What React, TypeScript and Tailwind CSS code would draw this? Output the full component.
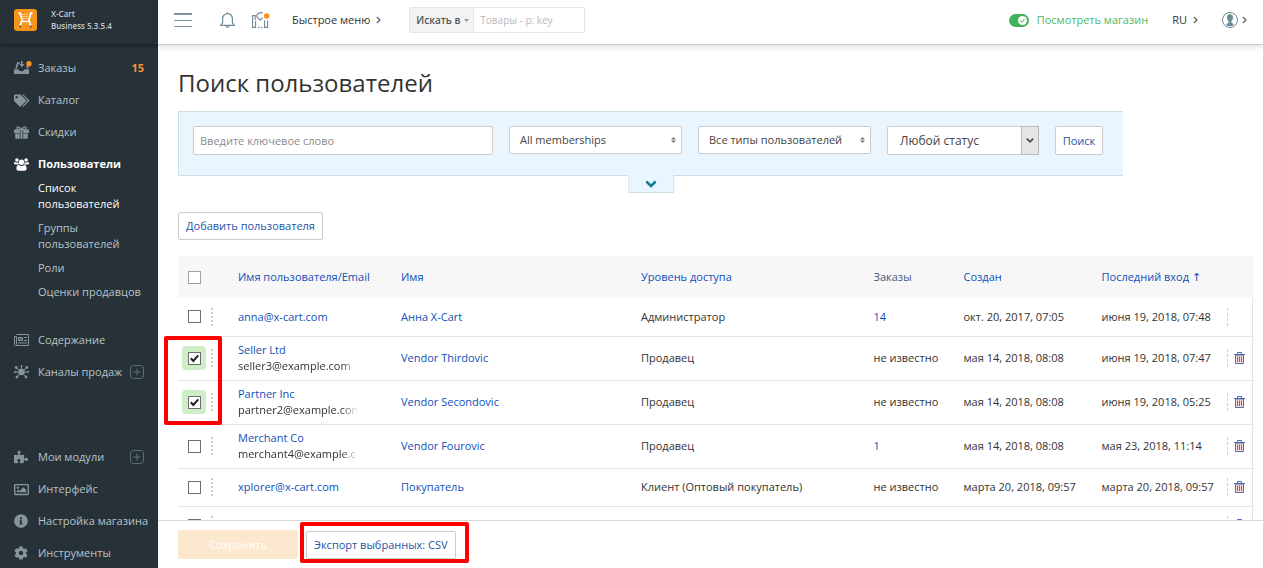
import React from "react";
import { FaTags, FaPuzzlePiece, FaRegImage, FaInfoCircle, FaCog } from "react-icons/fa";

const Chevron = () => (
  <svg className="h-2 w-[5px] shrink-0" viewBox="0 0 5 8" fill="none" stroke="#5b5b5b" strokeWidth="1.2">
    <path d="M.8 1 4 4 .8 7" />
  </svg>
);

const OrdersIcon = () => (
  <svg className="h-3.5 w-[18px]" viewBox="0 0 18 14">
    <path fill="currentColor" d="M3 1.200h3v1.500H4.300L3 7.600H1.200zM0 8.300h4.400c.4 1.300 1.400 2 3.100 2s2.700-.7 3.100-2H15V13H0zM12 4.500h1.800l1.100 3.100h-1.700zM7.100 0h1.500v3h2L7.900 6.200 5.200 3h1.900z" />
    <circle cx="15" cy="2.700" r="2.700" fill="#f7901e" />
  </svg>
);

const GiftIcon = () => (
  <svg className="h-[13px] w-[15px]" viewBox="0 0 15 13" fill="currentColor">
    <path d="M0 3.600h5.800V7H0zM9.200 3.600H15V7H9.200zM6.500 3.600h2v9.200h-2zM1.200 7.500h4.600v5.300H2.200a1 1 0 0 1-1-1zM9.200 7.500h4.600v4.300a1 1 0 0 1-1 1H9.200z" />
    <path d="M7.300 3.400C6.200 1.500 5.200.8 4.100.8c-1.600 0-1.700 2.500 0 2.600zM7.700 3.400C8.800 1.500 9.800.8 10.900.8c1.600 0 1.700 2.500 0 2.600z" fill="none" stroke="currentColor" strokeWidth="1.300" />
  </svg>
);

const UsersIcon = () => (
  <svg className="h-[13px] w-[15px]" viewBox="0 0 15 13" fill="currentColor">
    <circle cx="2.900" cy="2" r="1.800" />
    <circle cx="12.100" cy="2" r="1.800" />
    <circle cx="7.500" cy="4.200" r="2.700" />
    <path d="M1.200 4.100c1 .7 2 .7 3 .2.100 1 .4 1.700 1 2.300H1.500C.5 6.600 0 6.100 0 5.300c0-.7.500-1.400 1.200-1.200zM13.800 4.100c-1 .7-2 .7-3 .2-.1 1-.4 1.700-1 2.300h3.700c1 0 1.500-.5 1.500-1.300 0-.7-.5-1.400-1.200-1.200zM4.700 6.900c1.600 1.300 4 1.300 5.600 0 1.700 0 2.300 1.700 2.300 3.700 0 1.300-.8 2.100-2.100 2.100h-6c-1.300 0-2.100-.8-2.100-2.100 0-2 .6-3.700 2.300-3.700z" />
  </svg>
);

const NewsIcon = () => (
  <svg className="h-3 w-[15px]" viewBox="0 0 15 12" fill="none" stroke="currentColor">
    <path d="M2.500.5h12v11h-13a1 1 0 0 1-1-1v-8h2M2.500 2.500V10.500" />
    <path d="M4.500 3.500h4v3h-4z" fill="currentColor" fillOpacity=".5" />
    <path d="M10 3.500h3M10 6.500h3M4 8.900h9" />
  </svg>
);

const ChannelsIcon = () => (
  <svg className="h-3.5 w-[15px]" viewBox="0 0 15 14" stroke="currentColor" fill="currentColor">
    <path d="M7.500 7 2 2.500M7.500 7 13 2.500M7.500 7H.8M7.500 7h6.700M7.500 7 3 12M7.500 7 12 12M7.500 7V1" strokeWidth="1" />
    <circle cx="7.500" cy="7" r="3.200" stroke="none" />
    <g stroke="none">
      <circle cx="2.200" cy="2.500" r="1.400" />
      <circle cx="12.800" cy="2.500" r="1.400" />
      <circle cx="1" cy="7" r="1" />
      <circle cx="14" cy="7" r="1" />
      <circle cx="3" cy="12" r="1.400" />
      <circle cx="12" cy="12" r="1.400" />
      <circle cx="7.500" cy="1" r="1" />
    </g>
  </svg>
);

const Plus = () => (
  <svg className="size-3.5" viewBox="0 0 14 14" fill="none" stroke="#5f6f78">
    <rect x=".5" y=".5" width="13" height="13" rx="3" />
    <path d="M7 3.500v7M3.500 7h7" />
  </svg>
);

const Trash = () => (
  <svg className="h-3 w-[11px]" viewBox="0 0 11 12" fill="none">
    <path d="M1.500 3h8v8.500h-8z" fill="#f7dcdc" stroke="#5a6fae" />
    <path d="M3.500 4.500v5.500M5.500 4.500v5.500M7.500 4.500v5.500" stroke="#b8525f" />
    <path d="M0 2.500h11M3.500 2V.5h4V2" stroke="#4468b3" />
  </svg>
);

type NavItem = { label: string; icon: React.ReactNode; count?: string; plus?: boolean; active?: boolean };

const mainNav: NavItem[] = [
  { label: "Заказы", icon: <OrdersIcon />, count: "15" },
  { label: "Каталог", icon: <FaTags size={15} /> },
  { label: "Скидки", icon: <GiftIcon /> },
  { label: "Пользователи", icon: <UsersIcon />, active: true },
];
const subNav = ["Список пользователей", "Группы пользователей", "Роли", "Оценки продавцов"];
const salesNav: NavItem[] = [
  { label: "Содержание", icon: <NewsIcon /> },
  { label: "Каналы продаж", icon: <ChannelsIcon />, plus: true },
];
const systemNav: NavItem[] = [
  { label: "Мои модули", icon: <FaPuzzlePiece size={14} />, plus: true },
  { label: "Интерфейс", icon: <FaRegImage size={15} /> },
  { label: "Настройка магазина", icon: <FaInfoCircle size={14} /> },
  { label: "Инструменты", icon: <FaCog size={14} /> },
];

function NavList({ items }: { items: NavItem[] }) {
  return (
    <ul>
      {items.map((item) => (
        <li key={item.label}>
          <a href="#" className={`flex h-8 items-center pr-3.5 pl-3.5 whitespace-nowrap ${item.active ? "font-bold text-white" : "text-[#b7c3ca]"}`}>
            <span className={`w-6 shrink-0 ${item.active ? "text-white" : "text-[#87949b]"}`}>{item.icon}</span>
            <span>{item.label}</span>
            {item.count && <span className="ml-auto font-bold text-[#f7923a]">{item.count}</span>}
            {item.plus && <span className="ml-auto"><Plus /></span>}
          </a>
        </li>
      ))}
    </ul>
  );
}

function Checkbox({ label, checked, light }: { label: string; checked?: boolean; light?: boolean }) {
  return (
    <label className={`relative grid size-6 place-items-center rounded-sm ${checked ? "bg-[#cdeec6]" : ""}`}>
      <input type="checkbox" aria-label={label} defaultChecked={checked} className={`peer size-[13px] appearance-none border bg-white ${light ? "border-[#a0a0a0]" : "border-[#6e6e6e]"}`} />
      <svg className="pointer-events-none absolute hidden size-[9px] peer-checked:block" viewBox="0 0 9 9" fill="none" stroke="#1d1d1d" strokeWidth="2">
        <path d="M.8 4.300 3.300 7 8.300 1.300" />
      </svg>
    </label>
  );
}

type User = {
  login: string;
  email?: string;
  name: string;
  role: string;
  orders: string;
  created: string;
  last: string;
  checked?: boolean;
  locked?: boolean;
};

const users: User[] = [
  { login: "anna@x-cart.com", name: "Анна X-Cart", role: "Администратор", orders: "14", created: "окт. 20, 2017, 07:05", last: "июня 19, 2018, 07:48", locked: true },
  { login: "Seller Ltd", email: "seller3@example.com", name: "Vendor Thirdovic", role: "Продавец", orders: "не известно", created: "мая 14, 2018, 08:08", last: "июня 19, 2018, 07:47", checked: true },
  { login: "Partner Inc", email: "partner2@example.com", name: "Vendor Secondovic", role: "Продавец", orders: "не известно", created: "мая 14, 2018, 08:08", last: "июня 19, 2018, 05:25", checked: true },
  { login: "Merchant Co", email: "merchant4@example.com", name: "Vendor Fourovic", role: "Продавец", orders: "1", created: "мая 14, 2018, 08:08", last: "мая 23, 2018, 11:14" },
  { login: "xplorer@x-cart.com", name: "Покупатель", role: "Клиент (Оптовый покупатель)", orders: "не известно", created: "марта 20, 2018, 09:57", last: "марта 20, 2018, 09:57" },
  { login: "", name: "", role: "", orders: "", created: "", last: "" },
];

function UserRow({ user }: { user: User }) {
  return (
    <tr className={`border-b border-[#e4e4e4] ${user.email ? "h-11" : "h-[38px]"}`}>
      <td className="pl-1">
        <div className="flex items-center gap-[5px]">
          <Checkbox label={`Выбрать ${user.login}`} checked={user.checked} />
          <span className="h-[18px] border-l-2 border-dotted border-[#cdcdcd]" />
        </div>
      </td>
      <td className="leading-4">
        <a href="#" className="text-[#0f4fb8]">{user.login}</a>
        {user.email && (
          <div className="w-[120px] overflow-hidden [mask-image:linear-gradient(to_right,black_104px,transparent_120px)]">{user.email}</div>
        )}
      </td>
      <td><a href="#" className="text-[#0f4fb8]">{user.name}</a></td>
      <td>{user.role}</td>
      <td>{/^\d/.test(user.orders) ? <a href="#" className="text-[#0f4fb8]">{user.orders}</a> : user.orders}</td>
      <td>{user.created}</td>
      <td>{user.last}</td>
      <td className="border-r border-[#e4e4e4]">
        <div className="flex h-[18px] items-center border-l border-dashed border-[#cfcfcf] pl-1.5">
          {!user.locked && <button type="button" aria-label={`Удалить ${user.login}`}><Trash /></button>}
        </div>
      </td>
    </tr>
  );
}

function Select({ label, value }: { label: string; value: string }) {
  return (
    <div className="relative">
      <select aria-label={label} className="h-7 w-[173px] appearance-none rounded-xs border border-[#ccc] bg-white pr-5 pl-2.5 text-[#444]">
        <option>{value}</option>
      </select>
      <svg className="pointer-events-none absolute top-[11px] right-1.5 h-1.5 w-[5px]" viewBox="0 0 5 6" fill="#777">
        <path d="M0 2.500 2.500 0 5 2.500zM0 3.500h5L2.500 6z" />
      </svg>
    </div>
  );
}

function Header() {
  return (
    <header className="z-10 flex h-[45px] shrink-0 items-center border-b border-[#ccc] bg-white pr-4 pb-1 pl-4 text-[#333] shadow-[0_2px_6px_rgba(0,0,0,0.12)]">
      <button type="button" aria-label="Меню" className="flex w-[18px] flex-col gap-[5px]">
        <span className="h-0.5 bg-[#7d95a1]" />
        <span className="h-px bg-[#7d95a1]" />
        <span className="h-px bg-[#7d95a1]" />
      </button>
      <button type="button" aria-label="Уведомления" className="ml-7">
        <svg className="h-4 w-[15px]" viewBox="0 0 15 16" fill="none" stroke="#6f8996" strokeWidth="1.200">
          <path d="M.6 13.400h13.800l-2-2.600V6.500a4.900 4.900 0 0 0-9.800 0v4.300zM6 13.700a1.500 1.500 0 0 0 3 0M7.500 1.500V.2" />
        </svg>
      </button>
      <button type="button" aria-label="Маркетплейс" className="ml-[17px]">
        <svg className="h-4 w-[18px]" viewBox="0 0 18 16" fill="none" stroke="#6f8996" strokeWidth="1.100">
          <path d="M3.600 9v6.400h-3V3.600h2.600V8M4.600 4.200C4.800 1.800 6.800.6 10.600.6M4.600 4.500l3.600 3.800 2.600-2.600M6.200 15.400h1.500M9 15.400h1.500M12.600 8.500v6.900h3V8.500" />
          <circle cx="14.700" cy="4" r="2.700" fill="#f7901e" stroke="none" />
        </svg>
      </button>
      <button type="button" className="ml-[22px] flex items-center gap-1.5 whitespace-nowrap">Быстрое меню <Chevron /></button>
      <div className="ml-7 flex h-[26px] w-44 rounded-xs border border-[#e6e6e6] text-[10px]">
        <button type="button" className="flex w-16 shrink-0 items-center gap-1 border-r border-[#e6e6e6] bg-[#f3f3f3] pl-1.5 font-semibold whitespace-nowrap text-[#555]">
          Искать в
          <svg className="h-[3px] w-[5px]" viewBox="0 0 5 3" fill="#999"><path d="M0 0h5L2.500 3z" /></svg>
        </button>
        <input aria-label="Поиск" placeholder="Товары - p: key" className="min-w-0 flex-1 bg-white px-1.5 outline-none placeholder:text-[#b9b9b9]" />
      </div>
      <a href="#" className="ml-auto flex items-center gap-2 whitespace-nowrap text-[#4db865]">
        <svg className="h-[13px] w-5" viewBox="0 0 20 13" fill="none">
          <rect width="20" height="13" rx="6.500" fill="#41b35d" />
          <circle cx="13.500" cy="6.500" r="4.500" fill="#fff" />
          <path d="m11.300 6.300 1.700 1.900 2.700-3.400" stroke="#41b35d" />
        </svg>
        Посмотреть магазин
      </a>
      <button type="button" className="ml-6 flex items-center gap-1.5">RU <Chevron /></button>
      <button type="button" aria-label="Профиль" className="ml-6 flex items-center gap-1">
        <svg className="size-4" viewBox="0 0 16 16" fill="none">
          <circle cx="8" cy="8" r="7.500" stroke="#6f8996" />
          <path d="M8 2.200c2.300 0 3.300 1.600 3 3.800-.2 1.500-.8 2.500-1.500 3v1.800l2.500 1.500c-1 1.400-2.300 2-4 2s-3-.6-4-2l2.500-1.500V9C5.800 8.500 5.200 7.500 5 6c-.3-2.200.7-3.800 3-3.800z" fill="#6f8996" />
        </svg>
        <Chevron />
      </button>
    </header>
  );
}

export default function App() {
  return (
    <div className="relative flex h-screen overflow-hidden bg-white font-['Open_Sans',sans-serif] text-[11px] leading-4 text-[#333]">
      <aside className="flex w-[158px] shrink-0 flex-col overflow-hidden bg-[#263238]">
        <div className="flex h-[45px] shrink-0 items-center gap-3.5 border-b border-[#1d272c] pb-1 pl-3.5 shadow-[0_1px_3px_rgba(0,0,0,0.3)]">
          <svg className="h-[22px] w-[23px]" viewBox="0 0 23 22" fill="none">
            <rect width="23" height="22" rx="3" fill="#f7941e" />
            <path d="M4.500 4.200h1.700L8 10.800 6.200 16.800M18.500 4.200h-1.700L15 10.800l1.800 6M7.500 12.500h8" stroke="#fff" strokeWidth="1.700" />
            <path d="M8.500 5.500h6M8.500 7.500h6M8.500 9.500h6" stroke="#fff" strokeDasharray="1 1" />
            <circle cx="6.200" cy="17.600" r="1" fill="#6b3f1c" />
            <circle cx="16.800" cy="17.600" r="1" fill="#6b3f1c" />
          </svg>
          <div className="text-[8px] leading-3 font-semibold text-[#c0cbd1]">X-Cart<br />Business 5.3.5.4</div>
        </div>
        <nav className="flex flex-col pt-[7px]">
          <NavList items={mainNav} />
          <ul className="flex flex-col gap-2 pr-3 pl-[38px]">
            {subNav.map((label, i) => (
              <li key={label}><a href="#" className={`block ${i === 0 ? "text-white" : "text-[#b7c3ca]"}`}>{label}</a></li>
            ))}
          </ul>
          <div className="mt-6"><NavList items={salesNav} /></div>
          <div className="mt-[53px]"><NavList items={systemNav} /></div>
        </nav>
      </aside>

      <div className="flex min-w-0 flex-1 flex-col">
        <Header />
        <main className="min-h-0 flex-1 overflow-hidden px-5 pr-2.5">
          <h1 className="pt-5 text-[24px] leading-9">Поиск пользователей</h1>
          <form className="relative mt-2.5 flex h-[65px] w-fit items-start gap-4 border border-r-0 border-[#cfdde6] bg-[#e9f6ff] pt-3.5 pr-5 pl-3.5">
            <input aria-label="Ключевое слово" placeholder="Введите ключевое слово" className="h-[29px] w-[300px] rounded-xs border border-[#ccc] bg-white px-1.5 outline-none placeholder:text-[#8b8b8b]" />
            <Select label="Уровень" value="All memberships" />
            <Select label="Тип" value="Все типы пользователей" />
            <div className="relative">
              <select aria-label="Статус" className="h-[29px] w-[152px] appearance-none rounded-xs border border-[#ccc] bg-white pl-3 text-[12px] text-[#444]">
                <option>Любой статус</option>
              </select>
              <span className="pointer-events-none absolute top-0 right-0 grid h-[29px] w-[18px] place-items-center border border-[#bbb] bg-[#e6e6e6]">
                <svg className="h-[5px] w-2" viewBox="0 0 8 5" fill="none" stroke="#555" strokeWidth="1.800"><path d="m.7.7 3.300 3 3.300-3" /></svg>
              </span>
            </div>
            <button type="button" className="h-[29px] w-12 rounded-xs border border-[#ccc] bg-white text-[#2455a4]">Поиск</button>
            <button type="button" aria-label="Больше фильтров" className="absolute top-[63px] left-1/2 grid h-[18px] w-[47px] -translate-x-1/2 place-items-center rounded-b-xs border border-t-0 border-[#cfdde6] bg-[#e9f6ff]">
              <svg className="h-2 w-[11px]" viewBox="0 0 11 8" fill="none" stroke="#147c90" strokeWidth="2.500"><path d="m.8 1.500 4.700 4.500 4.700-4.500" /></svg>
            </button>
          </form>

          <button type="button" className="mt-9 h-7 rounded-xs border border-[#ccc] bg-white px-[7px] whitespace-nowrap text-[#2455a4]">Добавить пользователя</button>

          <table className="mt-4 w-full table-fixed border-collapse text-left whitespace-nowrap">
            <colgroup>
              <col className="w-[60px]" />
              <col className="w-[163px]" />
              <col className="w-[240px]" />
              <col />
              <col className="w-[90px]" />
              <col className="w-[138px]" />
              <col className="w-[125px]" />
              <col className="w-[26px]" />
            </colgroup>
            <thead>
              <tr className="h-[42px] bg-[#f7f7f7] text-[#0f4fb8]">
                <th className="pl-1"><Checkbox label="Выбрать всех" light /></th>
                <th className="font-normal"><a href="#">Имя пользователя/Email</a></th>
                <th className="font-normal"><a href="#">Имя</a></th>
                <th className="font-normal"><a href="#">Уровень доступа</a></th>
                <th className="font-normal text-[#3d5a86]">Заказы</th>
                <th className="font-normal"><a href="#">Создан</a></th>
                <th className="font-normal"><a href="#">Последний вход <span className="font-['DejaVu_Sans',sans-serif]">↑</span></a></th>
                <th />
              </tr>
            </thead>
            <tbody>
              {users.map((u) => <UserRow key={u.login} user={u} />)}
            </tbody>
          </table>
        </main>

        <footer className="flex h-12 shrink-0 items-center gap-2 border-t border-[#d8d8d8] bg-white pl-5">
          <button type="button" disabled className="h-[29px] w-[120px] rounded-xs bg-[#fce8cf] text-white">Сохранить</button>
          <button type="button" className="h-7 rounded-xs border border-[#ccc] bg-white px-[7px] whitespace-nowrap text-[#2455a4]">Экспорт выбранных: CSV</button>
        </footer>
      </div>

      <div className="pointer-events-none absolute top-[336px] left-[164px] z-20 h-[89px] w-[58px] rounded-xs border-4 border-[#fe0000]" />
      <div className="pointer-events-none absolute top-[522px] left-[300px] z-20 h-[41px] w-[169px] rounded-xs border-4 border-[#fe0000]" />
    </div>
  );
}
